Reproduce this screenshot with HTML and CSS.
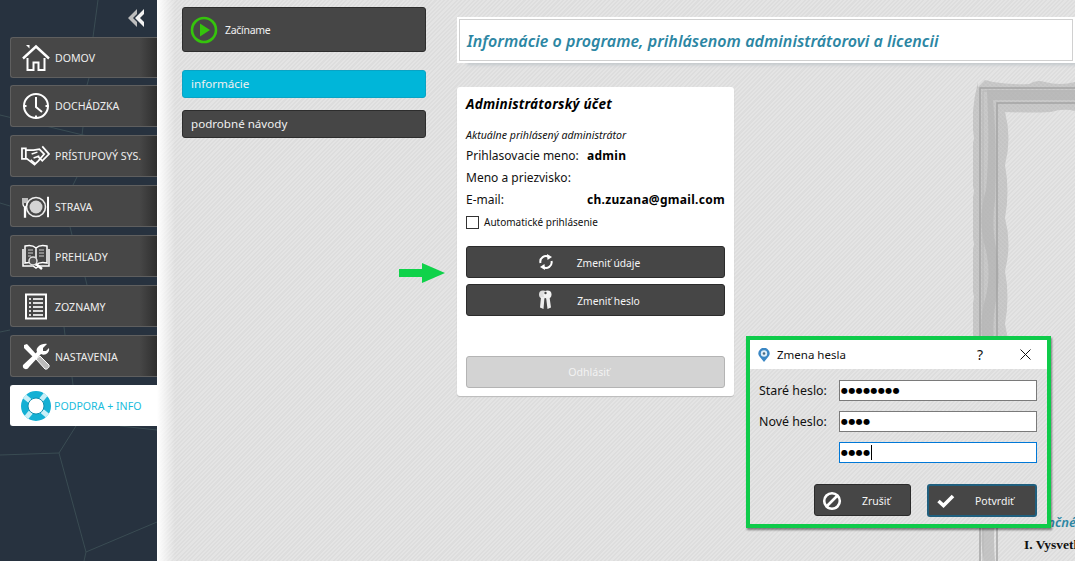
FILE: index.html
```html
<!DOCTYPE html>
<html lang="sk">
<head>
  <meta charset="UTF-8" />
  <meta name="viewport" content="width=device-width, initial-scale=1.0" />
  <title>Informácie o programe</title>
  <link rel="stylesheet" href="styles.css">
</head>
<body>
  <aside class="sidebar">
    <svg class="sidebar-lines" viewBox="0 0 157 561" width="157" height="561">
      <path d="M98 0L93 37M89 78L87 85M83 127L82 135M0 115L83 135L157 150M77 177L73 185M0 203L10 206M70 227L72 235M85 277L87 285M0 332L10 330M64 327L65 335M72 377L73 385M76 426L59 453L0 455M59 453L86 552L157 522M86 552L84 561M120 426L157 430"/>
    </svg>
    <button class="collapse" aria-label="Zbaliť">
      <svg viewBox="0 0 16 18" width="16" height="18"><path d="M9 0L0 9L9 18L9 13L5 9L9 5Z" fill="#bdbdbd"/><path d="M16 0L7 9L16 18L16 13L12 9L16 5Z" fill="#f2f2f2"/></svg>
    </button>
    <nav class="nav">
      <a class="nav-item">
        <svg class="nav-icon" viewBox="0 0 28 28"><path d="M1 14.500L14 2.500L27 14.500" fill="none" stroke="#fff" stroke-width="2.400"/><path d="M4 1h3.500v3.500z" fill="#fff"/><path d="M5.500 14V26H11.500V18.500H16.500V26H22.500V14" fill="none" stroke="#fff" stroke-width="2"/></svg>
        DOMOV
      </a>
      <a class="nav-item">
        <svg class="nav-icon" viewBox="0 0 28 28"><circle cx="14" cy="14" r="12" fill="none" stroke="#fff" stroke-width="2"/><path d="M14 5V15L20 20" fill="none" stroke="#fff" stroke-width="2"/><path d="M14 23.500v3M1.500 14h3M23.500 14h3" stroke="#fff" stroke-width="2"/></svg>
        DOCHÁDZKA
      </a>
      <a class="nav-item">
        <svg class="nav-icon wide" viewBox="0 0 30 22"><path d="M1 3H5V14H1zM5 5H13L19 4L24 9L18 16L14 20L9 16L5 13" fill="none" stroke="#fff" stroke-width="1.800"/><path d="M22 1L29 9L22 16L17 11" fill="none" stroke="#fff" stroke-width="1.800"/><path d="M11 9L17 7M13 13L19 11M10 15L15 19" stroke="#fff" stroke-width="1.600"/></svg>
        PRÍSTUPOVÝ SYS.
      </a>
      <a class="nav-item">
        <svg class="nav-icon" viewBox="0 0 28 28"><circle cx="14" cy="14" r="9.500" fill="none" stroke="#eee" stroke-width="1.600"/><circle cx="14" cy="14" r="6.500" fill="#d4d4d4"/><path d="M1 5V11C1 13 2 13 2.500 14V24H3.500V14C4 13 5 13 5 11V5M3 5V10" fill="none" stroke="#fff" stroke-width="1.300"/><path d="M25.500 4V24H26.500V4z" fill="#fff" stroke="#fff"/></svg>
        STRAVA
      </a>
      <a class="nav-item">
        <svg class="nav-icon" viewBox="0 0 28 28"><path d="M1 6V23H11L14 25L17 23H27V6" fill="none" stroke="#fff" stroke-width="1.500"/><path d="M14 5C11 2 7 2 3 3V20C7 19 11 19 14 22C17 19 21 19 25 20V3C21 2 17 2 14 5V22" fill="#444" stroke="#fff" stroke-width="1.500"/><path d="M6 7H11M6 10H11M6 13H9M17 7H22M17 10H22M17 13H22" stroke="#ccc" stroke-width="1.200"/><circle cx="11" cy="18" r="4" fill="#555" stroke="#ddd" stroke-width="1.500"/><path d="M14 21L20 26" stroke="#fff" stroke-width="2.400"/></svg>
        PREHĽADY
      </a>
      <a class="nav-item">
        <svg class="nav-icon" viewBox="0 0 28 28"><rect x="4" y="1.500" width="20" height="24" fill="none" stroke="#fff" stroke-width="2"/><path d="M7 6H9M7 10H9M7 14H9M7 18H9M7 22H9" stroke="#ddd" stroke-width="2"/><path d="M11 6H21M11 10H21M11 14H21M11 18H21M11 22H21" stroke="#ddd" stroke-width="2"/></svg>
        ZOZNAMY
      </a>
      <a class="nav-item">
        <svg class="nav-icon" viewBox="0 0 28 28"><path d="M2 2L5 1L14 11L11 14L2 5Z" fill="#fff"/><path d="M14 16L18 13L27 22C28 24 25 27 23 26Z" fill="#bbb" stroke="#fff" stroke-width="1"/><path d="M25 1L21 5V8H24L27 5C28 10 23 13 19 11L7 24C5 28 0 26 1 22L15 9C13 5 19 0 25 1Z" fill="#fff"/></svg>
        NASTAVENIA
      </a>
      <a class="nav-item active">
        <svg class="nav-icon buoy" viewBox="0 0 32 32"><circle cx="16" cy="16" r="11.500" fill="none" stroke="#13b0d4" stroke-width="7"/><path d="M16 1V8M16 24V31M1 16H8M24 16H31" transform="rotate(40 16 16)" stroke="#c8eff8" stroke-width="5"/><circle cx="16" cy="16" r="8" fill="#fff" stroke="#0b8fb0"/></svg>
        PODPORA + INFO
      </a>
    </nav>
  </aside>

  <main class="main">
    <svg class="frame" viewBox="0 0 102 481" width="102" height="481">
      <defs>
        <pattern id="mesh" width="3" height="3" patternUnits="userSpaceOnUse" patternTransform="rotate(45)">
          <rect width="3" height="3" fill="#c3c3c3"/>
          <path d="M0 0H3M0 0V3" stroke="#d0d0d0" stroke-width="1"/>
        </pattern>
      </defs>
      <path d="M5 7L12 0L20 2q18 3 36 2q8 -5 16 -2q15 4 30 0V31q-12 -3 -24 1q-20 1 -46 0
               q7 26 0 53q5 26 0 53q7 26 0 53q5 26 0 53q7 26 0 53q5 26 0 53q7 26 0 53q3 12 0 26H5
               q-9 -26 -4 -53q-5 -26 0 -53q-6 -26 0 -53q-5 -26 0 -53q-6 -26 0 -53q-5 -26 0 -53q-6 -26 0 -53q-4 -26 4 -56Z" fill="url(#mesh)"/>
      <path d="M11 481q-6 -26 2 -53q6 -26 -2 -53q-6 -26 2 -53q6 -26 -2 -53q-6 -26 2 -53q6 -26 -2 -53q-6 -26 2 -53q4 -40 1 -100H102V20H20q4 40 2 100q-4 26 2 53q4 26 -2 53q-4 26 2 53q4 26 -2 53q-4 26 2 53q4 26 -2 53q-2 20 0 43Z" fill="#b0b0b0" opacity=".6"/>
      <path d="M7 481V8H102M24 481V23H102" fill="none" stroke="#a4a4a4" stroke-width="1.500"/>
      <path d="M10 481V11H102" fill="none" stroke="#b8b8b8" stroke-width="1"/>
    </svg>

    <div class="subnav">
      <a class="sub-btn start">
        <svg class="play" viewBox="0 0 28 28" width="28" height="28"><circle cx="14" cy="14" r="12" fill="none" stroke="#35c40c" stroke-width="2.600"/><path d="M10 7.500L20 14L10 20.500Z" fill="#35c40c"/></svg>
        Začíname
      </a>
      <a class="sub-btn active">informácie</a>
      <a class="sub-btn">podrobné návody</a>
    </div>

    <div class="content">
      <header class="page-head">
        <h1>Informácie o programe, prihlásenom administrátorovi a licencii</h1>
      </header>

      <section class="card">
        <h2>Administrátorský účet</h2>
        <p class="note">Aktuálne prihlásený administrátor</p>
        <div class="info">
          <span>Prihlasovacie meno:</span><b>admin</b>
          <span>Meno a priezvisko:</span><b></b>
          <span>E-mail:</span><b>ch.zuzana@gmail.com</b>
        </div>
        <label class="auto"><span class="box"></span>Automatické prihlásenie</label>
        <div class="actions">
          <button class="btn">
            <svg class="btn-icon" viewBox="0 0 16 16" width="16" height="16"><path d="M2.500 9A5.600 5.600 0 0 1 11 3" fill="none" stroke="#fff" stroke-width="2"/><path d="M9 0L14 3L9.500 6Z" fill="#fff"/><path d="M13.500 7A5.600 5.600 0 0 1 5 13" fill="none" stroke="#fff" stroke-width="2"/><path d="M7 16L2 13L6.500 10Z" fill="#fff"/></svg>
            Zmeniť údaje
          </button>
          <button class="btn">
            <svg class="btn-icon" viewBox="0 0 14 20" width="14" height="20"><circle cx="5" cy="4.500" r="4" fill="#ddd"/><circle cx="9.500" cy="4.500" r="4" fill="#f2f2f2"/><circle cx="7.500" cy="3" r="1.200" fill="#444"/><path d="M3 7H6.500L5.500 19L2 17.500ZM8 7H11.500L13 17.500L9.500 19Z" fill="#eee"/></svg>
            Zmeniť heslo
          </button>
          <button class="btn off">Odhlásiť</button>
        </div>
      </section>
    </div>

    <div class="licence">
      <p class="licence-title">Licenčné podmienky</p>
      <p class="licence-sec">I. Vysvetlenie pojmov</p>
    </div>
  </main>

  <svg class="arrow" viewBox="0 0 46 20" width="46" height="20"><path d="M0 6H23V0L46 10L23 20V14H0Z" fill="#0fd24a"/></svg>

  <div class="dialog">
    <div class="dialog-title">
      <svg class="pin" viewBox="0 0 12 14" width="12" height="14"><path d="M6 14L1.500 8.500A5.500 5.500 0 1 1 10.500 8.500Z" fill="#3b87c4"/><circle cx="6" cy="5.500" r="3.200" fill="#dfeef8"/><circle cx="6" cy="5.500" r="1.300" fill="#4a6a80"/></svg>
      <span class="dialog-name">Zmena hesla</span>
      <span class="help">?</span>
      <svg class="close" viewBox="0 0 11 11" width="11" height="11"><path d="M0.500 0.500L10.500 10.500M10.500 0.500L0.500 10.500" stroke="#111" stroke-width="1"/></svg>
    </div>
    <div class="dialog-body">
      <div class="fields">
        <span>Staré heslo:</span><div class="field">●●●●●●●●</div>
        <span>Nové heslo:</span><div class="field">●●●●</div>
        <span></span><div class="field focus">●●●●<i class="caret"></i></div>
      </div>
      <div class="dialog-actions">
        <button class="btn cancel">
          <svg viewBox="0 0 20 20" width="20" height="20"><circle cx="10" cy="10" r="7.800" fill="none" stroke="#fff" stroke-width="2.600"/><path d="M4.500 15.500L15.500 4.500" stroke="#fff" stroke-width="2.600"/></svg>
          <span>Zrušiť</span>
        </button>
        <button class="btn confirm">
          <svg viewBox="0 0 18 14" width="18" height="14"><path d="M1.500 7L6.500 11.500L16 2" fill="none" stroke="#fff" stroke-width="3.600"/></svg>
          <span>Potvrdiť</span>
        </button>
      </div>
    </div>
  </div>
</body>
</html>
```

FILE: styles.css
```css
body {
  font-family: "Noto Sans", sans-serif;
  margin: 0;
  height: 100vh;
  display: flex;
  position: relative;
  overflow: hidden;
  font-size: 12px;
  color: #111;
}

a {
  display: flex;
  align-items: center;
}

h1,
h2,
p {
  margin: 0;
}

/* left column */
.sidebar {
  width: 157px;
  flex-shrink: 0;
  background: #27323f;
  position: relative;
  display: flex;
  flex-direction: column;
  align-items: flex-end;
  z-index: 1;
}

.sidebar-lines {
  position: absolute;
  left: 0;
  top: 0;
}

.sidebar-lines path {
  fill: none;
  stroke: #3a4c53;
  stroke-width: 1;
}

.collapse {
  position: relative;
  background: none;
  border: none;
  padding: 0;
  height: 18px;
  margin: 9px 13px 10px 0;
}

.nav {
  position: relative;
  width: 147px;
  display: flex;
  flex-direction: column;
  gap: 8px;
}

.nav-item {
  height: 42px;
  box-sizing: border-box;
  padding-left: 11px;
  gap: 5px;
  font-size: 10.6px;
  color: #eee;
  background: linear-gradient(to right, #474747 0%, #474747 88%, #2f2f2f 100%);
  border: 1px solid #5f5f5f;
  border-right: none;
  border-radius: 3px 0 0 3px;
  white-space: nowrap;
}

.nav-item:first-child {
  height: 41px;
  margin-bottom: -1px;
}

.nav-item:nth-child(n+4) {
  padding-top: 1px;
}

.nav-item.active {
  height: 41px;
  background: #fff;
  border-color: #fff;
  color: #19bcdc;
}

.nav-icon {
  width: 28px;
  height: 28px;
  flex-shrink: 0;
}

.nav-icon.wide {
  width: 29px;
  height: 22px;
  margin-left: -1px;
}

.nav-icon.buoy {
  width: 32px;
  height: 32px;
  margin-left: -2px;
  margin-right: -3px;
}

/* main area */
.main {
  flex: 1;
  display: flex;
  position: relative;
  min-width: 0;
  padding-left: 25px;
  background:
    linear-gradient(to right, #fff 0, rgba(255, 255, 255, 0) 18px),
    repeating-linear-gradient(135deg, #e4e4e4 0 1.5px, #dddddd 1.5px 3px);
}

.subnav {
  width: 244px;
  flex-shrink: 0;
  padding-top: 7px;
  position: relative;
}

.sub-btn {
  height: 28px;
  box-sizing: border-box;
  padding-left: 8px;
  margin-bottom: 12px;
  background: #464646;
  border: 1px solid #2d2d2d;
  border-radius: 3px;
  color: #f0f0f0;
  font-size: 11.6px;
  padding-bottom: 1px;
}

.sub-btn.start {
  height: 45px;
  gap: 7px;
  padding-left: 7px;
  padding-bottom: 0;
  margin-bottom: 18px;
  font-size: 10.5px;
  letter-spacing: -0.3px;
}

.sub-btn.active {
  background: #00b6d9;
  border-color: #0aa3c4;
}

.content {
  flex: 1;
  min-width: 0;
  padding: 17px 0 0 31px;
  position: relative;
}

.page-head {
  height: 46px;
  box-sizing: border-box;
  background: #fff;
  border: 1px solid #fff;
  outline: 1px solid #d0d0d0;
  outline-offset: -3px;
  box-shadow: 8px 4px 3px -2px #c3c8cc;
  display: flex;
  align-items: center;
  padding: 2px 0 0 9px;
  white-space: nowrap;
}

.page-head h1 {
  font-size: 16px;
  letter-spacing: 0.03px;
  font-style: italic;
  font-weight: 600;
  color: #2c86a3;
}

.card {
  width: 277px;
  height: 309px;
  box-sizing: border-box;
  margin-top: 24px;
  padding: 8px 9px 0;
  background: #fff;
  border-radius: 3px;
  box-shadow: 0 1px 1px #bbb;
}

.card h2 {
  font-size: 13.5px;
  letter-spacing: 0.2px;
  line-height: 18px;
  font-style: italic;
  font-weight: 700;
  color: #000;
}

.note {
  margin-top: 14px;
  font-size: 10.6px;
  line-height: 16px;
  font-style: italic;
}

.info {
  display: grid;
  grid-template-columns: 121px 1fr;
  grid-auto-rows: 22px;
  align-items: center;
  margin-top: 1px;
  font-size: 12px;
  white-space: nowrap;
}

.info b {
  color: #000;
  letter-spacing: 0.3px;
}

.auto {
  display: flex;
  align-items: center;
  height: 22px;
  margin-top: 1px;
  gap: 5px;
  font-size: 10px;
}

.box {
  width: 13px;
  height: 13px;
  box-sizing: border-box;
  border: 1px solid #333;
  background: #fff;
}

.actions {
  margin-top: 13px;
  display: flex;
  flex-direction: column;
  gap: 6px;
}

.btn {
  height: 32px;
  font-family: inherit;
  font-size: 10.3px;
  color: #f5f5f5;
  background: #464646;
  border: 1px solid #2b2b2b;
  border-radius: 3px;
  padding: 1px 0 0 26px;
  display: flex;
  align-items: center;
  justify-content: center;
  position: relative;
}

.btn-icon {
  position: absolute;
  left: 71px;
  top: 7px;
}

.actions .btn:nth-child(2) .btn-icon {
  top: 5px;
}

.btn.off {
  margin-top: 34px;
  padding: 0 13px 0 0;
  background: #d3d3d3;
  border-color: #b4b4b4;
  color: #f2f2f2;
  font-size: 10.6px;
}

/* certificate behind the dialog */
.frame {
  position: absolute;
  left: 816px;
  top: 80px;
}

.licence {
  position: absolute;
  left: 867px;
  right: 0;
  top: 514px;
  white-space: nowrap;
  overflow: hidden;
}

.licence-title {
  font-size: 13px;
  font-style: italic;
  font-weight: 600;
  color: #2c86a3;
  line-height: 16px;
}

.licence-sec {
  font-family: "Liberation Serif", serif;
  font-weight: 700;
  font-size: 13.5px;
  margin-top: 7px;
  color: #111;
}

.arrow {
  position: absolute;
  left: 399px;
  top: 263px;
}

/* dialog window */
.dialog {
  position: absolute;
  left: 746px;
  top: 336px;
  width: 305px;
  height: 192px;
  box-sizing: border-box;
  border: 4px solid #0ecb4a;
  box-shadow: 1px 2px 2px rgba(0, 0, 0, 0.45);
  display: flex;
  flex-direction: column;
  z-index: 2;
}

.dialog-title {
  height: 29px;
  flex-shrink: 0;
  background: #fff;
  display: flex;
  align-items: center;
  padding-left: 8px;
  font-size: 11.5px;
}

.pin {
  margin-right: 7px;
}

.dialog-name {
  width: 200px;
}

.help {
  width: 43px;
  font-size: 14px;
}

.dialog-body {
  flex: 1;
  background: repeating-linear-gradient(135deg, #e4e4e4 0 1.5px, #dddddd 1.5px 3px);
  padding: 11px 10px 0 9px;
  display: flex;
  flex-direction: column;
}

.fields {
  display: grid;
  grid-template-columns: 80px 198px;
  grid-auto-rows: 21px;
  row-gap: 10px;
  align-items: center;
  font-size: 12.4px;
}

.field {
  height: 21px;
  box-sizing: border-box;
  background: #fff;
  border: 1px solid #7a7a7a;
  font-family: "DejaVu Sans", sans-serif;
  font-size: 8px;
  line-height: 19px;
  padding-left: 1px;
  letter-spacing: 0.4px;
  color: #000;
  white-space: nowrap;
}

.field.focus {
  border-color: #0078d7;
}

.caret {
  display: inline-block;
  width: 1px;
  height: 15px;
  background: #000;
  vertical-align: middle;
}

.dialog-actions {
  display: flex;
  justify-content: flex-end;
  gap: 16px;
  margin-top: 21px;
}

.dialog-actions .btn {
  height: 32px;
  justify-content: flex-start;
  font-size: 10.5px;
}

.cancel.btn {
  width: 97px;
  padding-left: 7px;
  gap: 20px;
}

.confirm.btn {
  width: 110px;
  height: 33px;
  padding-left: 8px;
  gap: 20px;
  border: 2px solid #1f5f7e;
}
```
